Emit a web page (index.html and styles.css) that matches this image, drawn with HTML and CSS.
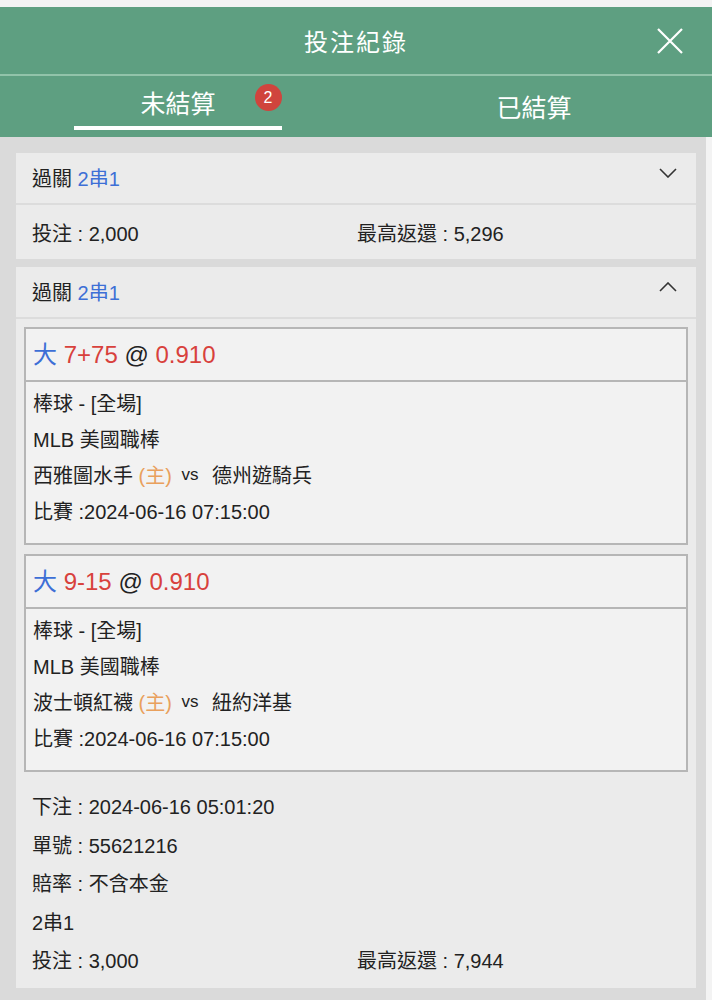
FILE: index.html
```html
<!DOCTYPE html>
<html>
<head>
    <meta charset="UTF-8">
    <title>投注紀錄</title>
    <link rel="stylesheet" href="styles.css">
</head>
<body>
    <div class="app">
        <header class="topbar">
            <h1 class="title">投注紀錄</h1>
            <span class="close">
                <svg width="26" height="26" viewBox="0 0 26 26"><path d="M1 1 L25 25 M25 1 L1 25" stroke="#fff" stroke-width="2.2" fill="none"/></svg>
            </span>
        </header>

        <nav class="tabs">
            <div class="tab active"><span class="tab-label">未結算<i class="badge">2</i></span></div>
            <div class="tab"><span class="tab-label">已結算</span></div>
        </nav>

        <main class="list">
            <!-- 收合的注單 -->
            <section class="card">
                <div class="card-head">
                    <span>過關 <em class="blue">2串1</em></span>
                    <svg class="chevron" width="18" height="10" viewBox="0 0 18 10"><polyline points="1,1 9,9 17,1" fill="none" stroke="#333" stroke-width="1.6"/></svg>
                </div>
                <div class="pair summary">
                    <span>投注 : 2,000</span>
                    <span>最高返還 : 5,296</span>
                </div>
            </section>

            <!-- 展開的注單 -->
            <section class="card">
                <div class="card-head">
                    <span>過關 <em class="blue">2串1</em></span>
                    <svg class="chevron" width="18" height="10" viewBox="0 0 18 10"><polyline points="1,9 9,1 17,9" fill="none" stroke="#333" stroke-width="1.6"/></svg>
                </div>
                <div class="card-body">
                    <div class="leg">
                        <div class="leg-title"><span class="blue">大</span> <span class="red">7+75</span> @ <span class="red">0.910</span></div>
                        <div class="leg-info">
                            <p>棒球 - [全場]</p>
                            <p>MLB 美國職棒</p>
                            <p>西雅圖水手 <span class="home">(主)</span> <span class="vs">vs</span> 德州遊騎兵</p>
                            <p>比賽 :2024-06-16 07:15:00</p>
                        </div>
                    </div>
                    <div class="leg">
                        <div class="leg-title"><span class="blue">大</span> <span class="red">9-15</span> @ <span class="red">0.910</span></div>
                        <div class="leg-info">
                            <p>棒球 - [全場]</p>
                            <p>MLB 美國職棒</p>
                            <p>波士頓紅襪 <span class="home">(主)</span> <span class="vs">vs</span> 紐約洋基</p>
                            <p>比賽 :2024-06-16 07:15:00</p>
                        </div>
                    </div>
                    <div class="details">
                        <p>下注 : 2024-06-16 05:01:20</p>
                        <p>單號 : 55621216</p>
                        <p>賠率 : 不含本金</p>
                        <p>2串1</p>
                        <div class="pair">
                            <span>投注 : 3,000</span>
                            <span>最高返還 : 7,944</span>
                        </div>
                    </div>
                </div>
            </section>
        </main>
    </div>
</body>
</html>
```

FILE: styles.css
```css
* {
    margin: 0;
    padding: 0;
    box-sizing: border-box;
}
body {
    font-family: "Liberation Sans", "Noto Sans CJK TC", sans-serif;
    background-color: #f3f3f3;
    color: #222;
}
.app {
    padding-top: 7px;
}
.topbar {
    position: relative;
    height: 69px;
    background-color: #5e9f81;
    border-bottom: 2px solid #92c3aa;
    display: flex;
    align-items: center;
    justify-content: center;
}
.title {
    font-size: 24px;
    font-weight: normal;
    letter-spacing: 2px;
    color: #fff;
}
.close {
    position: absolute;
    right: 29px;
    top: 21px;
    display: flex;
}
.tabs {
    display: flex;
    height: 61px;
    background-color: #5e9f81;
}
.tab {
    position: relative;
    flex: 1;
    display: flex;
    align-items: center;
    justify-content: center;
    padding-top: 4px;
    color: #fff;
    font-size: 25px;
}
.tab.active {
    padding-top: 0;
    padding-bottom: 5px;
}
.tab.active::after {
    content: '';
    position: absolute;
    left: 74px;
    width: 208px;
    bottom: 7px;
    height: 4px;
    background-color: #fff;
}
.tab-label {
    position: relative;
    line-height: 1;
}
.badge {
    position: absolute;
    left: calc(100% + 39px);
    top: -8px;
    width: 27px;
    height: 27px;
    border-radius: 50%;
    background-color: #d0443d;
    color: #fff;
    font-style: normal;
    font-size: 16px;
    line-height: 27px;
    text-align: center;
}
.list {
    background-color: #dadada;
    margin-right: 6px;
    padding: 16px 10px 13px 16px;
    min-height: 863px;
}
.card {
    background-color: #ebebeb;
    margin-bottom: 8px;
    font-size: 20px;
}
.card-head {
    display: flex;
    justify-content: space-between;
    align-items: center;
    height: 52px;
    padding: 0 19px 2px 16px;
    border-bottom: 2px solid #dcdcdc;
}
.card-head .chevron {
    align-self: flex-start;
    margin-top: 15px;
}
.blue {
    color: #3d6fd6;
    font-style: normal;
}
.red {
    color: #d8413c;
}
.pair {
    display: grid;
    grid-template-columns: 325px 1fr;
}
.summary {
    height: 54px;
    align-items: center;
    padding: 0 16px;
}
.card-body {
    padding: 8px 8px 7px;
}
.leg {
    background-color: #f2f2f2;
    border: 2px solid #b6b6b6;
    margin-bottom: 9px;
}
.leg-title {
    height: 53px;
    padding: 0 7px;
    line-height: 51px;
    font-size: 24px;
    border-bottom: 2px solid #b6b6b6;
    overflow: hidden;
}
.leg-info {
    padding: 4px 7px 13px;
    line-height: 36px;
}
.leg-info p {
    height: 36px;
}
.home {
    color: #e9a05c;
}
.vs {
    font-size: 17px;
    position: relative;
    top: -3px;
    margin-left: 4px;
    margin-right: 8px;
}
.details {
    padding: 7px 8px 0;
    line-height: 38.5px;
}
.details p,
.details .pair {
    height: 38.5px;
}
```
